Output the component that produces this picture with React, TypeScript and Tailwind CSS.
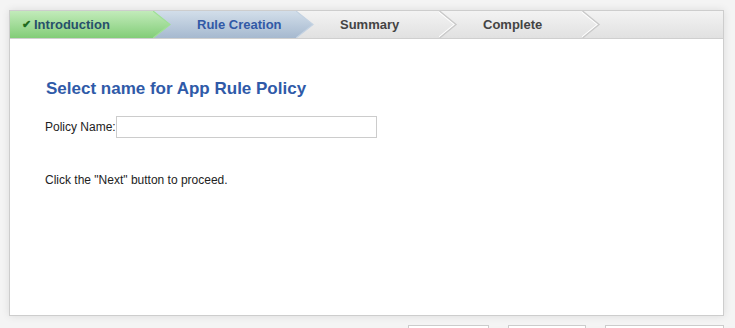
import React from 'react';

type Step = {
  label: string;
  state: 'done' | 'active' | 'todo';
};

const steps: Step[] = [
  { label: 'Introduction', state: 'done' },
  { label: 'Rule Creation', state: 'active' },
  { label: 'Summary', state: 'todo' },
  { label: 'Complete', state: 'todo' },
];

const StepArrow: React.FC<{ state: Step['state']; id: string }> = ({ state, id }) => {
  if (state === 'todo') {
    return (
      <svg width="20" height="27" viewBox="0 0 20 27" className="absolute top-0 left-full z-10">
        <polyline points="0.5,0 17,13.5 0.5,27" fill="none" stroke="#ffffff" strokeWidth="1.5" transform="translate(-1.5,0)" />
        <polyline points="0.5,0 17,13.5 0.5,27" fill="none" stroke="#c9c9c9" strokeWidth="1.4" />
      </svg>
    );
  }
  const top = state === 'done' ? '#c2ebba' : '#d2deea';
  const bottom = state === 'done' ? '#82cd78' : '#a6b9cf';
  const edge = state === 'done' ? '#9fe094' : '#c3d2e2';
  return (
    <svg width="20" height="27" viewBox="0 0 20 27" className="absolute top-0 left-full z-10">
      <defs>
        <linearGradient id={id} x1="0" y1="0" x2="0" y2="1">
          <stop offset="0" stopColor={top} />
          <stop offset="1" stopColor={bottom} />
        </linearGradient>
      </defs>
      <polygon points="0,0 17,13.5 0,27" fill={`url(#${id})`} />
      <polyline points="0,0 17,13.5 0,27" fill="none" stroke={edge} strokeWidth="1.2" />
    </svg>
  );
};

const StepBar: React.FC = () => (
  <div className="flex h-[28px] border-b border-[#cfcfcf] bg-linear-to-b from-[#f3f3f3] to-[#e1e1e1]">
    {steps.map((s, i) => (
      <div
        key={s.label}
        className={`relative flex h-[27px] w-[143px] items-center text-[13px] font-bold ${
          i === 0 ? 'pl-[12px]' : 'pl-[44px]'
        } ${
          s.state === 'done'
            ? 'bg-linear-to-b from-[#c2ebba] to-[#82cd78] text-[#27506a]'
            : s.state === 'active'
            ? 'bg-linear-to-b from-[#d2deea] to-[#a6b9cf] text-[#3159a6]'
            : 'text-[#444444]'
        }`}
      >
        {s.state === 'done' && <span className="mr-[3px] text-[11px] text-[#1f6b1f]">✔</span>}
        <span className="relative z-20">{s.label}</span>
        <StepArrow state={s.state} id={`grad-${i}`} />
      </div>
    ))}
  </div>
);

const App: React.FC = () => {
  return (
    <div className="h-[328px] w-[735px] overflow-hidden bg-[#f4f4f4] font-['Liberation_Sans',Arial,sans-serif] text-[12px] text-[#222222]">
      <div className="pl-[9px] pt-[10px] pr-[11px]">
        <div className="flex h-[306px] flex-col border border-[#cdcdcd] bg-white shadow-[0_0_8px_rgba(0,0,0,0.10)]">
          <StepBar />

          <div className="pl-[35px] pt-[40px]">
            <h2 className="ml-[1px] text-[17px] font-bold leading-[20px] text-[#2f5aa8]">
              Select name for App Rule Policy
            </h2>

            <div className="mt-[17px] flex items-center">
              <label className="leading-[14px]">Policy Name:</label>
              <input
                type="text"
                aria-label="Policy Name"
                className="h-[22px] w-[261px] border border-[#cccccc] bg-white px-1 outline-none"
              />
            </div>

            <p className="mt-[35px] leading-[14px]">Click the "Next" button to proceed.</p>
          </div>
        </div>

        <div className="mt-[9px] flex justify-end gap-[19px]">
          <button aria-label="Back" className="h-[26px] w-[81px] border border-[#cccccc] bg-white" />
          <button aria-label="Next" className="h-[26px] w-[78px] border border-[#cccccc] bg-white" />
          <button aria-label="Cancel" className="h-[26px] w-[119px] border border-[#cccccc] bg-white" />
        </div>
      </div>
    </div>
  );
};

export default App;
